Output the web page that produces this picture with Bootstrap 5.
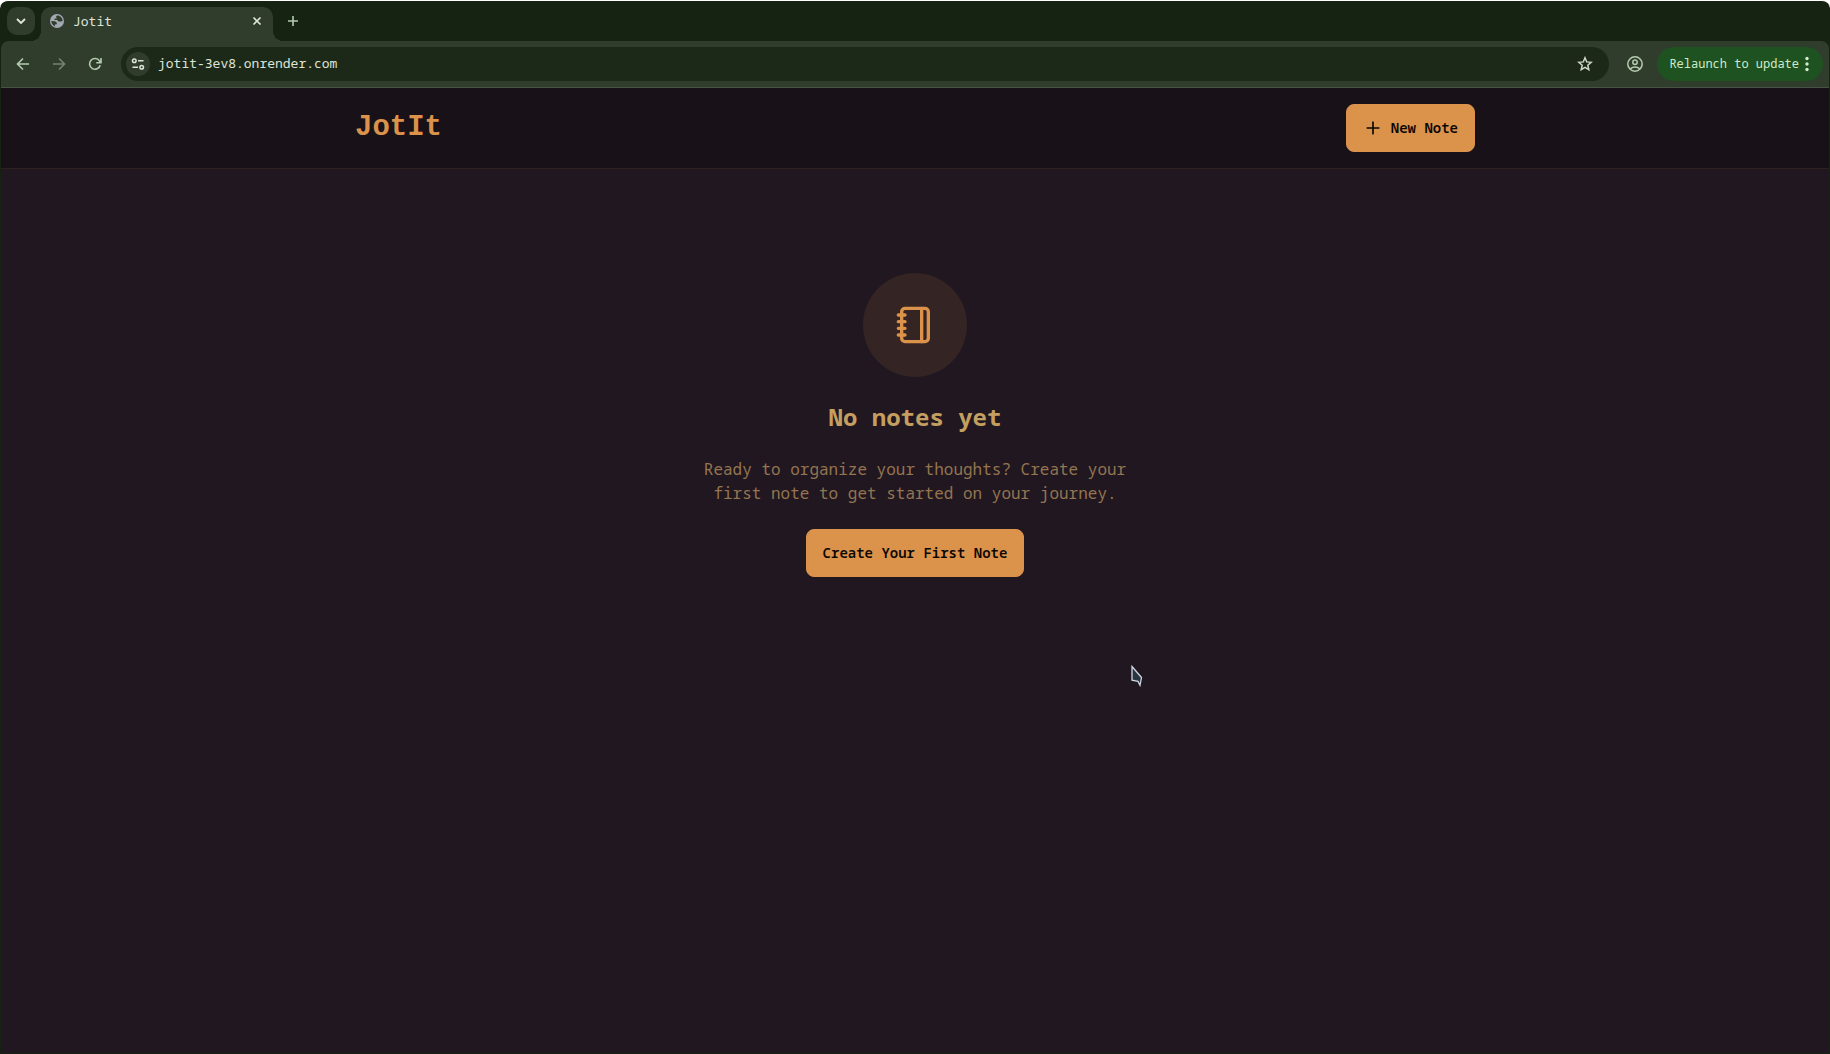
<!DOCTYPE html>
<html lang="en">
<head>
<meta charset="utf-8">
<meta name="viewport" content="width=device-width, initial-scale=1">
<title>Jotit</title>
<link href="https://cdn.jsdelivr.net/npm/bootstrap@5.3.0/dist/css/bootstrap.min.css" rel="stylesheet">
<style>
body{font-family:"Noto Sans Mono","DejaVu Sans Mono",monospace;background:#fff;color:#c59f60}
button{font-family:inherit}
svg{display:block;flex:none}
.window-frame{background:#162312;border-top:1px solid #fff;border-radius:8px 8px 0 0;overflow:hidden;padding:0 1px 1px}
.tab-strip{height:40px;padding:6px 6px 0;gap:6px}
.chrome-btn{border:0;background:transparent;color:#b5ccb0;padding:0;display:flex;align-items:center;justify-content:center;width:28px;height:28px;border-radius:14px}
.tab-search{background:#303d2d;border-radius:10px;color:#dfe9da}
.active-tab{position:relative;width:232px;height:34px;gap:9px;padding:0 6px 6px 9px;background:#303d2d;border-radius:10px 10px 0 0;color:#dde5d8;font-size:13px;line-height:20px}
.active-tab::before,.active-tab::after{content:"";position:absolute;bottom:0;width:10px;height:10px}
.active-tab::before{left:-10px;background:radial-gradient(circle at 0 0,transparent 10px,#303d2d 10px)}
.active-tab::after{right:-10px;background:radial-gradient(circle at 100% 0,transparent 10px,#303d2d 10px)}
.active-tab .chrome-btn{color:#dde5d8;width:20px}
.toolbar{height:47px;padding:0 6px 0 8px;background:#303d2d;border-bottom:1px solid #475344;border-radius:8px 8px 0 0}
.nav-buttons{gap:8px;width:112px}
.omnibox{height:34px;background:#1c2919;border-radius:17px;padding:0 10px 0 5px;color:#dde5d8}
.omnibox input{background:transparent;border:0;outline:0;color:#dde5d8;font-size:13px;padding:0;min-width:0}
.site-info{width:24px;height:24px;background:#303d2d;color:#dde5d8}
.profile-btn{margin:0 8px 0 12px}
.relaunch{height:34px;border:0;border-radius:17px;background:#1e5220;color:#cfeac8;font-size:12px;padding:0 12px}
.app-page{background:#211720}
.app-header{background:#181117;border-bottom:1px solid #2f211e;height:81px}
.app-inner{max-width:1152px;padding:0 16px}
.brand{font-family:"Liberation Mono",monospace;font-size:29px;line-height:36px;font-weight:700;color:#db924b}
.btn-note{--bs-btn-color:#0a0602;--bs-btn-bg:#db924b;--bs-btn-border-color:#db924b;--bs-btn-hover-color:#0a0602;--bs-btn-hover-bg:#c98341;--bs-btn-hover-border-color:#c98341;--bs-btn-font-size:14px;--bs-btn-font-weight:600;--bs-btn-line-height:20px;--bs-btn-padding-x:16px;--bs-btn-border-radius:8px;height:48px}
.empty-state{padding:104px 16px 0;gap:24px}
.icon-disc{width:104px;height:104px;background:#342423;color:#db924b}
.empty-title{font-size:24px;line-height:32px;font-weight:700}
.empty-text{max-width:448px;font-size:16px;line-height:24px;color:#937550}
.pointer{position:absolute;left:1131px;top:665px}
</style>
<script src="https://cdn.jsdelivr.net/npm/bootstrap@5.3.0/dist/js/bootstrap.bundle.min.js"></script>
</head>
<body>
<div class="window-frame d-flex flex-column min-vh-100">
  <div class="tab-strip d-flex">
    <button class="chrome-btn tab-search" aria-label="Search tabs"><svg width="12" height="12" viewBox="0 0 12 12" fill="none" stroke="currentColor" stroke-width="1.8"><path d="M2 4l4 4 4-4"/></svg></button>
    <div class="active-tab d-flex align-items-center">
      <svg width="14" height="14" viewBox="0 0 14 14"><circle cx="7" cy="7" r="7" fill="#a2a8b2"/><path d="M7 1.400L5.900 2.900 7 4.400H4.700L4.500 6h2.700l1.500 1.600 2.300-.1L12.600 7C12.700 4 10.300 1.300 7 1.400zM1.400 6.900L5 7.200l1.900 1.500-.2 1.500-1.800.2v2C2.900 11.500 1.300 9.400 1.400 6.900z" fill="#303d2d"/></svg>
      <span class="flex-grow-1">Jotit</span>
      <button class="chrome-btn" aria-label="Close tab"><svg width="10" height="10" viewBox="0 0 10 10" stroke="currentColor" stroke-width="1.7"><path d="M1.500 1.500l7 7M8.500 1.500l-7 7"/></svg></button>
    </div>
    <button class="chrome-btn" aria-label="New tab"><svg width="12" height="12" viewBox="0 0 12 12" stroke="currentColor" stroke-width="1.600"><path d="M6 1v10M1 6h10"/></svg></button>
  </div>
  <div class="toolbar d-flex align-items-center">
    <div class="nav-buttons d-flex">
      <button class="chrome-btn" aria-label="Back"><svg width="14" height="14" viewBox="0 0 14 14" fill="none" stroke="currentColor" stroke-width="1.600"><path d="M13 7H2M7 1.500L1.500 7 7 12.500"/></svg></button>
      <button class="chrome-btn opacity-50" aria-label="Forward"><svg width="14" height="14" viewBox="0 0 14 14" fill="none" stroke="currentColor" stroke-width="1.600"><path d="M1 7h11M7 1.500L12.500 7 7 12.500"/></svg></button>
      <button class="chrome-btn" aria-label="Reload"><svg width="14" height="14" viewBox="0 0 14 14" fill="none" stroke="currentColor" stroke-width="1.600"><path d="M12.200 8.200A5.400 5.400 0 1 1 11.500 3.900L13 5.500M13 1v4.700H8.300"/></svg></button>
    </div>
    <div class="omnibox d-flex align-items-center flex-grow-1">
      <button class="chrome-btn site-info" aria-label="Site information"><svg width="14" height="14" viewBox="0 0 14 14" fill="none" stroke="currentColor" stroke-width="1.500"><circle cx="3.300" cy="3.700" r="1.800"/><path d="M7 3.700h5.500M1.500 10.300H7"/><circle cx="10.700" cy="10.300" r="1.800"/></svg></button>
      <input class="flex-grow-1 ms-2" type="text" aria-label="Address" value="jotit-3ev8.onrender.com">
      <button class="chrome-btn" aria-label="Bookmark this page"><svg width="16" height="16" viewBox="0 0 16 16" fill="none" stroke="#ccd5c8" stroke-width="1.500"><path d="M8 1.800l1.700 4.100 4.500.4-3.400 2.900 1 4.400L8 11.300l-3.800 2.300 1-4.400-3.400-2.900 4.500-.4z"/></svg></button>
    </div>
    <button class="chrome-btn profile-btn" aria-label="Profile"><svg width="16" height="16" viewBox="0 0 16 16" fill="none" stroke="currentColor" stroke-width="1.500"><circle cx="8" cy="8" r="7.200"/><circle cx="8" cy="6.300" r="2.200"/><path d="M3 13c2.800-2.600 7.200-2.600 10 0"/></svg></button>
    <button class="relaunch d-flex align-items-center gap-1"><span>Relaunch to update</span><svg width="8" height="16" viewBox="0 0 8 16" fill="currentColor"><circle cx="4" cy="2.500" r="1.700"/><circle cx="4" cy="8" r="1.700"/><circle cx="4" cy="13.500" r="1.700"/></svg></button>
  </div>
  <div class="app-page flex-grow-1">
    <header class="app-header d-flex align-items-center">
      <div class="app-inner container-fluid d-flex align-items-center justify-content-between">
        <h1 class="brand mb-0">JotIt</h1>
        <button class="btn btn-note d-flex align-items-center gap-2"><svg width="20" height="20" viewBox="0 0 24 24" fill="none" stroke="currentColor" stroke-width="2" stroke-linecap="round"><path d="M5 12h14M12 5v14"/></svg>New Note</button>
      </div>
    </header>
    <main class="empty-state d-flex flex-column align-items-center text-center">
      <div class="icon-disc rounded-circle d-flex align-items-center justify-content-center"><svg width="40" height="40" viewBox="0 0 24 24" fill="none" stroke="currentColor" stroke-width="2" stroke-linecap="round" stroke-linejoin="round"><path d="M2 6h4M2 10h4M2 14h4M2 18h4"/><rect width="16" height="20" x="4" y="2" rx="2"/><path d="M16 2v20"/></svg></div>
      <h2 class="empty-title mb-0">No notes yet</h2>
      <p class="empty-text mb-0">Ready to organize your thoughts? Create your first note to get started on your journey.</p>
      <button class="btn btn-note">Create Your First Note</button>
    </main>
  </div>
</div>
<svg class="pointer" width="13" height="22" viewBox="0 0 13 22" fill="#2b3541" stroke="#cdd6e2" stroke-width="1.300"><path d="M1 1.500L10.500 12.500 9 20.300 7 16.400 1 15.200z"/></svg>
</body>
</html>
